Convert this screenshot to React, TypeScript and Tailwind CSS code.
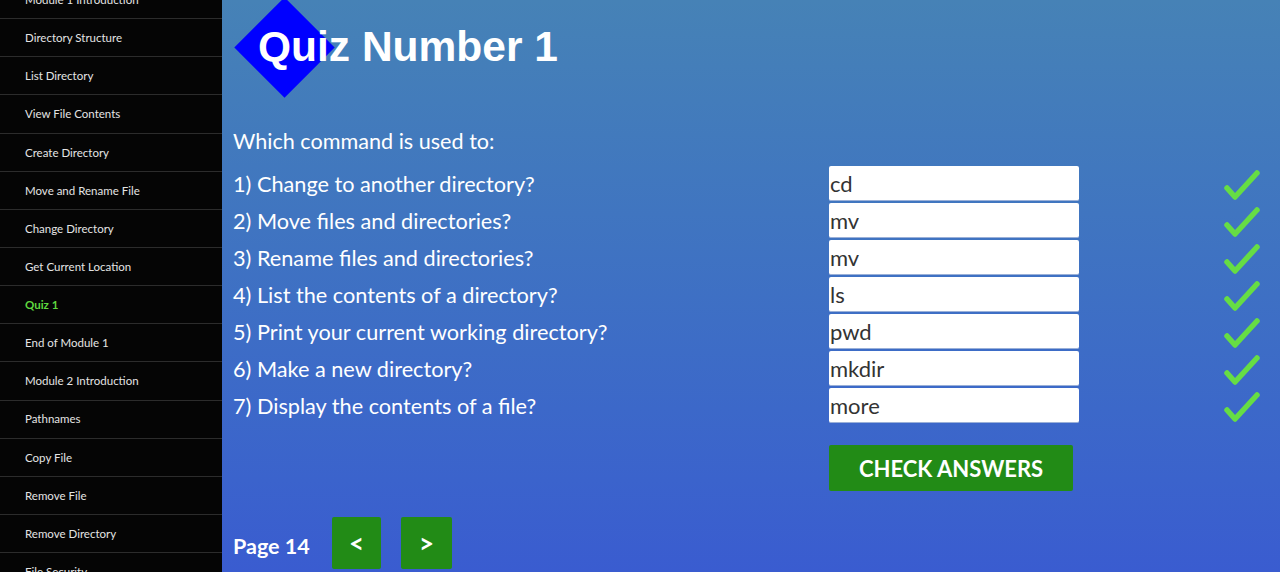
import React from "react";

const sidebarItems = [
  "Module 1 Introduction",
  "Directory Structure",
  "List Directory",
  "View File Contents",
  "Create Directory",
  "Move and Rename File",
  "Change Directory",
  "Get Current Location",
  "Quiz 1",
  "End of Module 1",
  "Module 2 Introduction",
  "Pathnames",
  "Copy File",
  "Remove File",
  "Remove Directory",
  "File Security",
];

const questions: [string, string][] = [
  ["1) Change to another directory?", "cd"],
  ["2) Move files and directories?", "mv"],
  ["3) Rename files and directories?", "mv"],
  ["4) List the contents of a directory?", "ls"],
  ["5) Print your current working directory?", "pwd"],
  ["6) Make a new directory?", "mkdir"],
  ["7) Display the contents of a file?", "more"],
];

function Check() {
  return (
    <svg width="36" height="34" viewBox="0 0 36 34" className="block">
      <path
        d="M3 21 L11 30 L33 6"
        fill="none"
        stroke="#66dd44"
        strokeWidth="5.5"
        strokeLinecap="round"
        strokeLinejoin="round"
      />
    </svg>
  );
}

export default function App() {
  return (
    <div className="flex h-[572px] w-[1280px] overflow-hidden font-['Lato','Noto_Sans',sans-serif]">
      <aside className="w-[222px] shrink-0 overflow-hidden bg-[#050505]">
        <div className="mt-[-19px]">
          {sidebarItems.map((item) => (
            <div
              key={item}
              className={`flex h-[38.15px] items-center border-b border-[#2c2c2c] pl-[25px] text-[11.5px] ${
                item === "Quiz 1" ? "font-bold text-[#5fd83f]" : "text-[#e4e4e4]"
              }`}
            >
              {item}
            </div>
          ))}
        </div>
      </aside>
      <main className="flex-1 bg-gradient-to-b from-[#4682b6] to-[#3a5cd0] pl-[11px] text-white">
        <div className="relative h-[122px]">
          <div className="absolute left-[1px] top-[-3px] h-[100px] w-[100px]">
            <div className="absolute left-[14.5px] top-[14.5px] h-[71px] w-[71px] rotate-45 bg-[#0000ff]" />
          </div>
          <h1 className="relative pl-[25px] pt-[23px] font-['Liberation_Sans',Arial,sans-serif] text-[42.5px] font-bold leading-[48px] text-white">
            Quiz Number 1
          </h1>
        </div>
        <div className="mb-[6px] flex h-[37px] items-center pt-[2px] text-[21.6px]">Which command is used to:</div>
        {questions.map(([q, a]) => (
          <div key={q} className="grid h-[37px] grid-cols-[596px_250px_1fr] items-center">
            <div className="pt-[2px] text-[21.7px] leading-none">{q}</div>
            <div className="flex h-[35px] items-center rounded-[2px] border-b border-[#9ab0d8] bg-white pl-[1px] text-[22px] text-[#333]">
              {a}
            </div>
            <div className="flex justify-end pr-[20px]">
              <Check />
            </div>
          </div>
        ))}
        <div className="mt-[21px] pl-[596px]">
          <button className="flex h-[46px] w-[244px] items-center justify-center rounded-[2px] bg-[#228b16] text-[22px] font-bold text-white">
            CHECK ANSWERS
          </button>
        </div>
        <div className="mt-[26px] flex items-center">
          <span className="w-[99px] pt-[6px] text-[21.5px] font-bold">Page 14</span>
          <button className="flex h-[52px] w-[49px] items-center justify-center rounded-[2px] bg-[#228b16] text-[26px] font-bold text-white">
            &lt;
          </button>
          <button className="ml-[20px] flex h-[52px] w-[51px] items-center justify-center rounded-[2px] bg-[#228b16] text-[26px] font-bold text-white">
            &gt;
          </button>
        </div>
      </main>
    </div>
  );
}
